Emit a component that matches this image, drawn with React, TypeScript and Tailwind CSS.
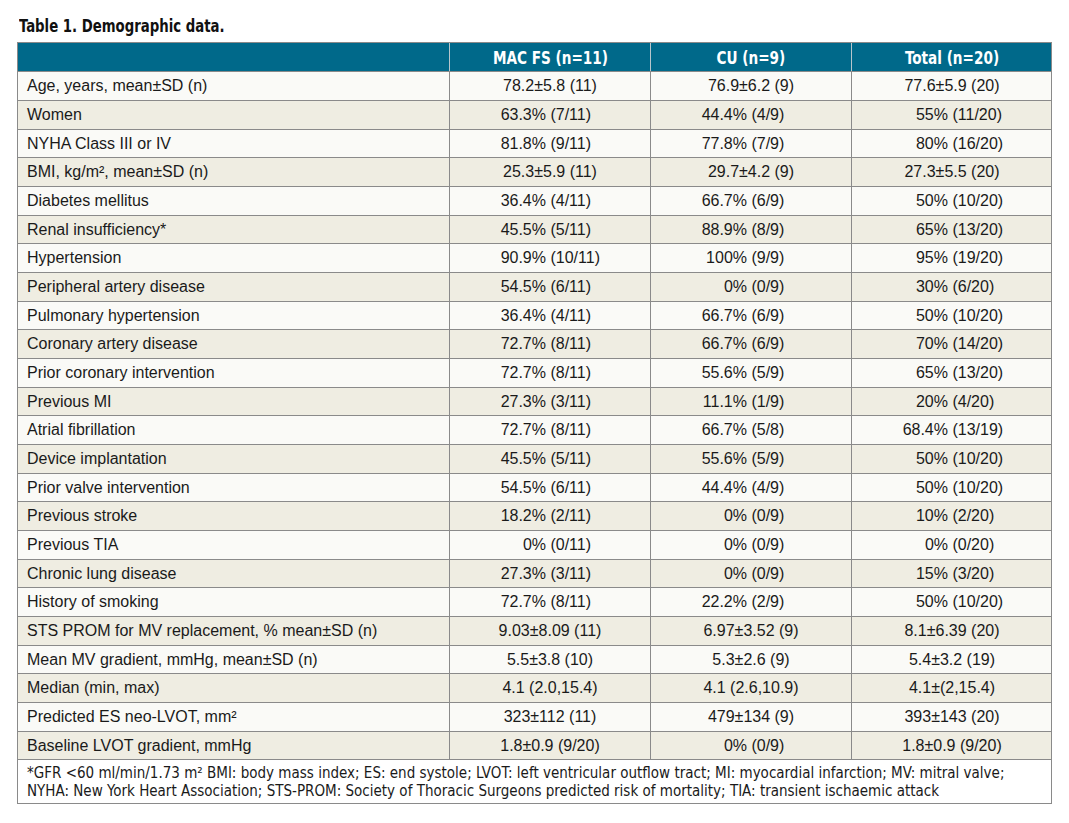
import React from "react";

const rows: string[][] = [
  ["Age, years, mean±SD (n)", "78.2±5.8 (11)", "76.9±6.2 (9)", "77.6±5.9 (20)"],
  ["Women", "63.3% (7/11)", "44.4% (4/9)", "55% (11/20)"],
  ["NYHA Class III or IV", "81.8% (9/11)", "77.8% (7/9)", "80% (16/20)"],
  ["BMI, kg/m², mean±SD (n)", "25.3±5.9 (11)", "29.7±4.2 (9)", "27.3±5.5 (20)"],
  ["Diabetes mellitus", "36.4% (4/11)", "66.7% (6/9)", "50% (10/20)"],
  ["Renal insufficiency*", "45.5% (5/11)", "88.9% (8/9)", "65% (13/20)"],
  ["Hypertension", "90.9% (10/11)", "100% (9/9)", "95% (19/20)"],
  ["Peripheral artery disease", "54.5% (6/11)", "0% (0/9)", "30% (6/20)"],
  ["Pulmonary hypertension", "36.4% (4/11)", "66.7% (6/9)", "50% (10/20)"],
  ["Coronary artery disease", "72.7% (8/11)", "66.7% (6/9)", "70% (14/20)"],
  ["Prior coronary intervention", "72.7% (8/11)", "55.6% (5/9)", "65% (13/20)"],
  ["Previous MI", "27.3% (3/11)", "11.1% (1/9)", "20% (4/20)"],
  ["Atrial fibrillation", "72.7% (8/11)", "66.7% (5/8)", "68.4% (13/19)"],
  ["Device implantation", "45.5% (5/11)", "55.6% (5/9)", "50% (10/20)"],
  ["Prior valve intervention", "54.5% (6/11)", "44.4% (4/9)", "50% (10/20)"],
  ["Previous stroke", "18.2% (2/11)", "0% (0/9)", "10% (2/20)"],
  ["Previous TIA", "0% (0/11)", "0% (0/9)", "0% (0/20)"],
  ["Chronic lung disease", "27.3% (3/11)", "0% (0/9)", "15% (3/20)"],
  ["History of smoking", "72.7% (8/11)", "22.2% (2/9)", "50% (10/20)"],
  ["STS PROM for MV replacement, % mean±SD (n)", "9.03±8.09 (11)", "6.97±3.52 (9)", "8.1±6.39 (20)"],
  ["Mean MV gradient, mmHg, mean±SD (n)", "5.5±3.8 (10)", "5.3±2.6 (9)", "5.4±3.2 (19)"],
  ["Median (min, max)", "4.1 (2.0,15.4)", "4.1 (2.6,10.9)", "4.1±(2,15.4)"],
  ["Predicted ES neo-LVOT, mm²", "323±112 (11)", "479±134 (9)", "393±143 (20)"],
  ["Baseline LVOT gradient, mmHg", "1.8±0.9 (9/20)", "0% (0/9)", "1.8±0.9 (9/20)"],
];

const heights = ["h-[29px]", "h-[29px]", "h-[28px]"];

function Cell({ v }: { v: string }) {
  const m = v.match(/^(\S+%)(.*)$/);
  if (m) {
    return (
      <div className="flex items-center border-l border-[#8a8a8a]">
        <span className="w-[96px] shrink-0 text-right">{m[1]}</span>
        <span className="whitespace-pre">{m[2]}</span>
      </div>
    );
  }
  return (
    <div className="flex items-center justify-center border-l border-[#8a8a8a]">
      <span className="whitespace-pre">{v}</span>
    </div>
  );
}

function Head({ children }: { children: React.ReactNode }) {
  return (
    <div className="flex items-center justify-center border-l border-[#b8c6cc]">
      <span className="inline-block whitespace-pre scale-x-[0.84]">{children}</span>
    </div>
  );
}

export default function App() {
  const cond = { fontFamily: '"Liberation Sans Narrow", "DejaVu Sans Condensed", "Roboto Condensed", sans-serif' };
  return (
    <div className="w-[1069px] h-[823px] bg-white pl-[17px]" style={{ fontFamily: '"Liberation Sans", Arial, sans-serif' }}>
      <div className="h-[42px] pt-[15px] pl-[2px]">
        <div
          className="inline-block origin-left scale-x-[0.82] whitespace-pre text-[18px] leading-[20px] font-bold text-[#111]"
          style={cond}
        >
          Table 1. Demographic data.
        </div>
      </div>
      <div className="w-[1035px] border border-[#8a8a8a] text-[16px] text-[#1a1a1a]">
        <div
          className="grid grid-cols-[431px_201px_201px_201px] h-[29px] bg-[#00698a] text-white font-bold text-[18px] border-b border-[#8a8a8a]"
          style={cond}
        >
          <div />
          <Head>MAC FS (n=11)</Head>
          <Head>CU (n=9)</Head>
          <Head>Total (n=20)</Head>
        </div>
        {rows.map((r, i) => (
          <div
            key={i}
            className={`grid grid-cols-[431px_201px_201px_201px] border-b border-[#8a8a8a] ${heights[i % 3]} ${
              i % 2 === 0 ? "bg-[#fafaf7]" : "bg-[#efede2]"
            }`}
          >
            <div className="flex items-center pl-[9px] whitespace-pre">{r[0]}</div>
            <Cell v={r[1]} />
            <Cell v={r[2]} />
            <Cell v={r[3]} />
          </div>
        ))}
        <div className="h-[43px] pt-[4px] pl-[9px] text-[15px] leading-[18px] text-[#1a1a1a] bg-white" style={cond}>
          <div>
            *GFR &lt;60 ml/min/1.73 m² BMI: body mass index; ES: end systole; LVOT: left ventricular outflow tract; MI:
            myocardial infarction; MV: mitral valve;
          </div>
          <div>
            NYHA: New York Heart Association; STS-PROM: Society of Thoracic Surgeons predicted risk of mortality; TIA:
            transient ischaemic attack
          </div>
        </div>
      </div>
    </div>
  );
}
